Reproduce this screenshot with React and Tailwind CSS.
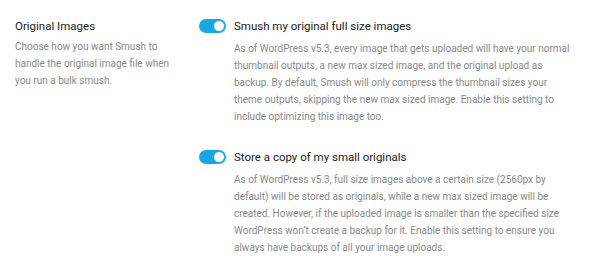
import React from "react";

function Toggle() {
  return (
    <span className="relative inline-flex h-[14px] w-[27px] shrink-0 items-center rounded-full bg-[#17a8e3]">
      <span className="absolute right-[1px] top-[1px] h-[12px] w-[12px] rounded-full border border-[#17a8e3] bg-white" />
    </span>
  );
}

function Setting({ label, children, className = "" }) {
  return (
    <div className={className}>
      <div className="flex items-center gap-[8px]">
        <Toggle />
        <span className="text-[11.5px] font-normal leading-[17px] text-[#222222]">{label}</span>
      </div>
      <p className="ml-[35px] mt-[5px] w-[341px] text-[10px] leading-[17px] text-[#888888]">{children}</p>
    </div>
  );
}

export default function App() {
  return (
    <div className="flex h-[268px] w-[600px] bg-white pl-[15px] pt-[17.5px]" style={{ fontFamily: "Roboto, sans-serif" }}>
      <div className="w-[184px] shrink-0">
        <h3 className="text-[11.5px] font-normal leading-[17px] text-[#222222]">Original Images</h3>
        <p className="mt-[3.5px] w-[165px] text-[10px] leading-[17px] text-[#888888]">
          Choose how you want Smush to handle the original image file when you run a bulk smush.
        </p>
      </div>
      <div className="flex flex-col">
        <Setting label="Smush my original full size images">
          As of WordPress v5.3, every image that gets uploaded will have your normal thumbnail outputs, a new max sized image, and the original upload as backup. By default, Smush will only compress the thumbnail sizes your theme outputs, skipping the new max sized image. Enable this setting to include optimizing this image too.
        </Setting>
        <Setting label="Store a copy of my small originals" className="mt-[24px]">
          As of WordPress v5.3, full size images above a certain size (2560px by default) will be stored as originals, while a new max sized image will be created. However, if the uploaded image is smaller than the specified size WordPress won’t create a backup for it. Enable this setting to ensure you always have backups of all your image uploads.
        </Setting>
      </div>
    </div>
  );
}
